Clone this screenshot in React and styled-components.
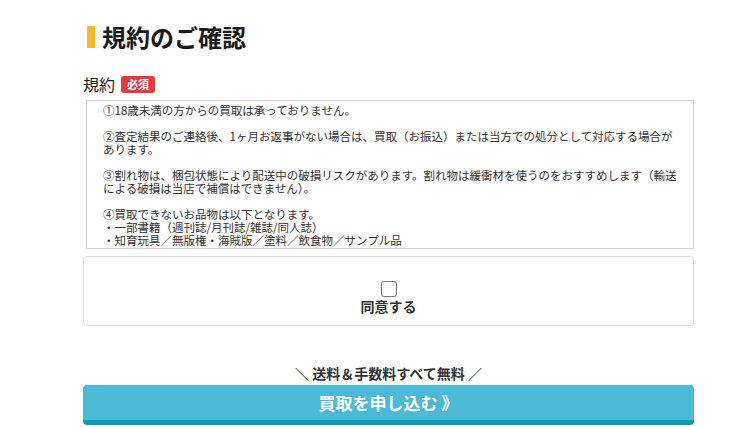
import styled, { createGlobalStyle } from 'styled-components';

const GlobalStyle = createGlobalStyle`
  body {
    margin: 0;
    background: #fff;
    font-family: "Noto Sans CJK JP", "Noto Sans", sans-serif;
    color: #222;
  }
`;

const TERMS = `①18歳未満の方からの買取は承っておりません。

②査定結果のご連絡後、1ヶ月お返事がない場合は、買取（お振込）または当方での処分として対応する場合があります。

③割れ物は、梱包状態により配送中の破損リスクがあります。割れ物は緩衝材を使うのをおすすめします（輸送による破損は当店で補償はできません）。

④買取できないお品物は以下となります。
・一部書籍（週刊誌/月刊誌/雑誌/同人誌）
・知育玩具／無版権・海賊版／塗料／飲食物／サンプル品
・ビデオテープ/8mm・CD（エアガン・ガスガン）
・その他、当店が買取不可と判断したもの`;

export default function App() {
  return (
    <>
      <GlobalStyle />
      <Section>
        <Heading>
          <HeadingMark />
          規約のご確認
        </Heading>

        <FieldLabel>
          規約
          <Badge>必須</Badge>
        </FieldLabel>

        {/* terms text, scrollable */}
        <TermsBox>{TERMS}</TermsBox>

        <AgreeBox>
          <Checkbox type="checkbox" id="agree" />
          <AgreeLabel htmlFor="agree">同意する</AgreeLabel>
        </AgreeBox>

        <FreeNote>＼ 送料＆手数料すべて無料 ／</FreeNote>
        <SubmitButton type="button">買取を申し込む 》</SubmitButton>
      </Section>
    </>
  );
}

const Section = styled.section`
  width: 611px;
  padding: 21px 0 0 83px;
  display: flex;
  flex-direction: column;
`;

const Heading = styled.h2`
  margin: 0 0 0 4px;
  display: flex;
  align-items: center;
  gap: 7px;
  font-size: 24px;
  font-weight: 700;
  line-height: 32px;
  color: #1a1a1a;
`;

const HeadingMark = styled.span`
  width: 8px;
  height: 22px;
  background: #fbb62b;
`;

const FieldLabel = styled.div`
  margin-top: 20px;
  display: flex;
  align-items: center;
  gap: 6px;
  font-size: 16px;
  line-height: 22px;
  color: #222;
`;

const Badge = styled.span`
  display: inline-flex;
  align-items: center;
  justify-content: center;
  width: 34px;
  height: 17px;
  border-radius: 3px;
  background: #e8383b;
  color: #fff;
  font-size: 11px;
  font-weight: 700;
`;

const TermsBox = styled.div`
  margin: 5px 0 0 3px;
  height: 149px;
  box-sizing: border-box;
  padding: 3px 10px 0 16px;
  border: 1px solid #d2d6db;
  overflow: hidden;
  white-space: pre-line;
  font-size: 11.5px;
  line-height: 13px;
  color: #333;
`;

const AgreeBox = styled.div`
  margin-top: 7px;
  height: 70px;
  box-sizing: border-box;
  padding-top: 24px;
  border: 1px solid #d5dbe1;
  border-radius: 4px;
  display: flex;
  flex-direction: column;
  align-items: center;
`;

const Checkbox = styled.input`
  appearance: none;
  margin: 0;
  width: 16px;
  height: 16px;
  border: 1px solid #767676;
  border-radius: 3px;
  background: #fff;
`;

const AgreeLabel = styled.label`
  font-size: 14px;
  font-weight: 700;
  line-height: 18px;
  color: #333;
`;

const FreeNote = styled.p`
  margin: 38px 0 0;
  text-align: center;
  font-size: 14px;
  font-weight: 700;
  line-height: 18px;
  color: #333;
`;

const SubmitButton = styled.button`
  margin-top: 3px;
  height: 40px;
  border: none;
  border-bottom: 5px solid #05a0b6;
  border-radius: 4px;
  background: #4bb9d8;
  color: #fff;
  font-family: inherit;
  font-size: 17px;
  font-weight: 700;
  cursor: pointer;
`;
